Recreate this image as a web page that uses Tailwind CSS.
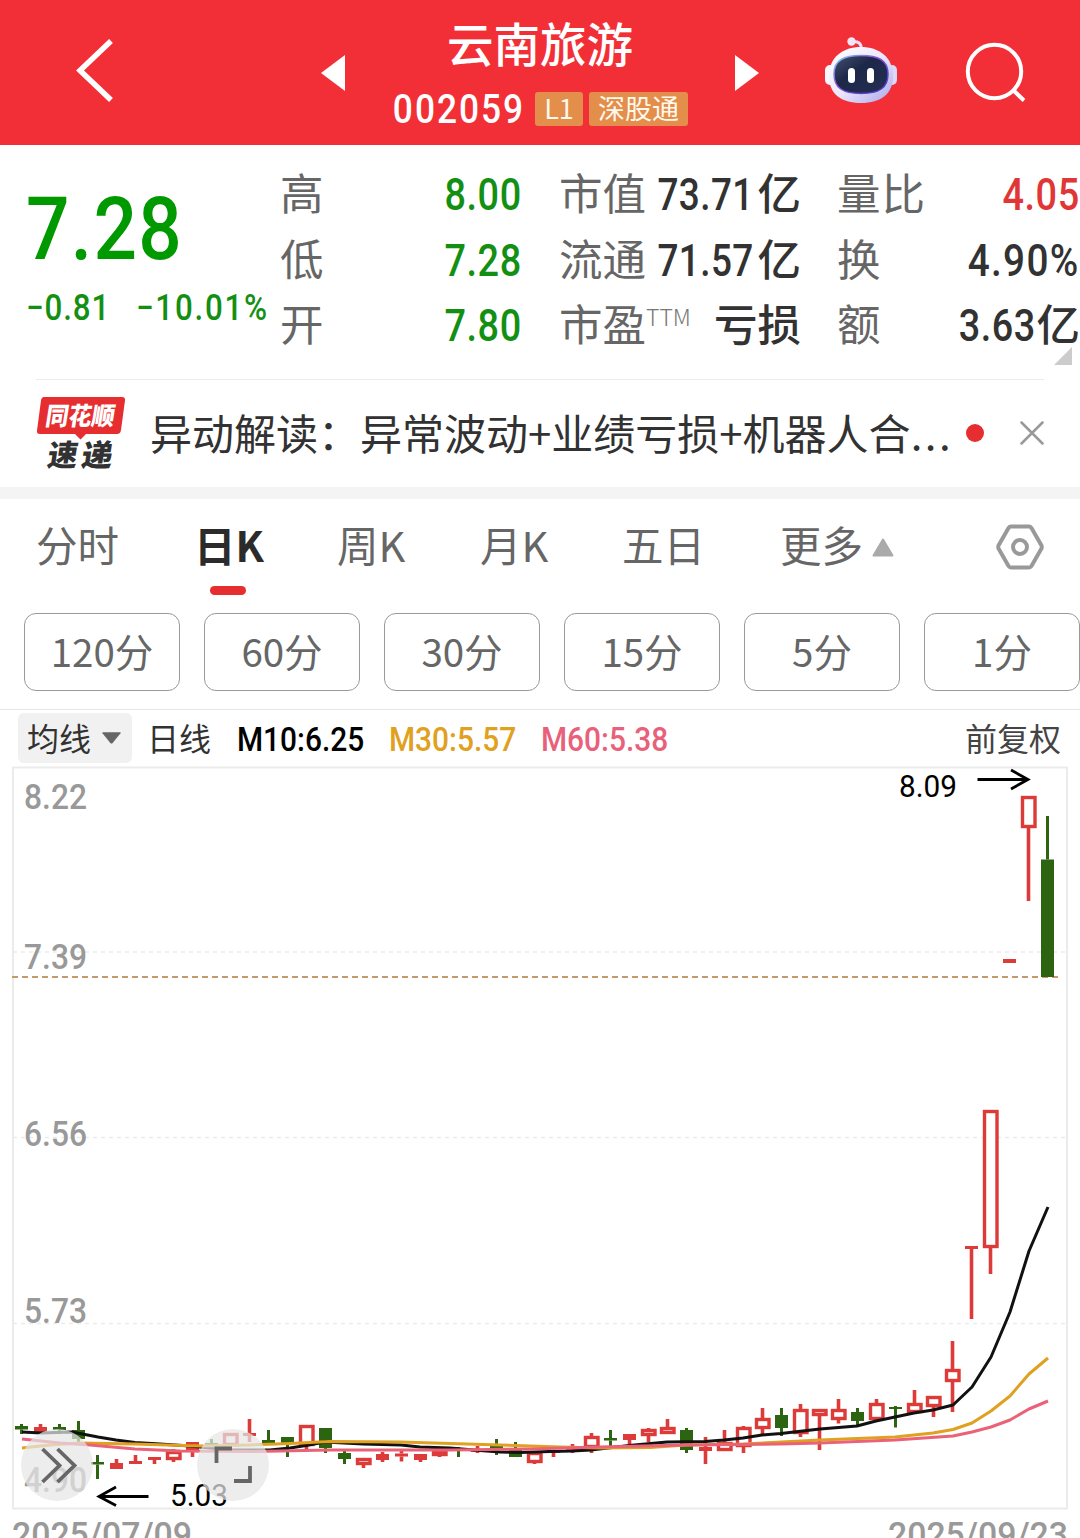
<!DOCTYPE html>
<html lang="zh-CN">
<head>
    <meta charset="UTF-8">
    <meta name="viewport" content="width=device-width, initial-scale=1.0">
    <title>云南旅游 002059</title>
    <script src="https://cdn.jsdelivr.net/npm/@tailwindcss/browser@4"></script>
</head>
<body class="w-[1080px] h-[1538px] overflow-hidden bg-white font-['Noto_Sans_CJK_SC',sans-serif] text-[#323232]">

    <!-- Header -->
    <header class="h-[145px] bg-[#f22f37] text-white flex items-start">
        <svg class="w-[321px] h-[145px] shrink-0" viewBox="0 0 321 145" fill="none">
            <path d="M111 41L80 70.5L111 100" stroke="#fff" stroke-width="5.5"/>
        </svg>
        <svg class="w-6 h-[145px] shrink-0" viewBox="0 0 24 145"><path d="M0 73L24 55V91Z" fill="#fff"/></svg>
        <div class="w-[390px] flex flex-col items-center">
            <h1 class="text-[46.5px] font-medium leading-[50px] mt-[17px]">云南旅游</h1>
            <div class="flex items-center h-[34px] mt-[25px]">
                <span class="w-[131px] mr-[12px] flex"><span class="inline-block origin-left scale-x-[0.86] font-[Roboto] font-medium text-[41px] leading-[34px] tracking-[2.300px] pl-[1px]">002059</span></span>
                <span class="w-12 h-[34px] rounded-[3px] bg-[#e38e4b] text-[27px] leading-[32px] text-center text-[#fff8ec]">L1</span>
                <span class="w-[99px] h-[34px] rounded-[3px] bg-[#e38e4b] text-[27px] leading-[32px] text-center text-[#fff8ec] ml-1.5">深股通</span>
            </div>
        </div>
        <svg class="w-6 h-[145px] shrink-0" viewBox="0 0 24 145"><path d="M24 73L0 55V91Z" fill="#fff"/></svg>
        <svg class="w-[76px] h-[145px] shrink-0 ml-16" viewBox="823 0 76 145">
            <defs>
                <linearGradient id="head" x1="0" y1="0" x2="1" y2="1">
                    <stop offset="0" stop-color="#fff"/><stop offset="0.5" stop-color="#ece8fb"/><stop offset="1" stop-color="#a9a4ea"/>
                </linearGradient>
                <linearGradient id="rim" x1="0" y1="0" x2="1" y2="1">
                    <stop offset="0" stop-color="#7fd3ef"/><stop offset="0.4" stop-color="#8a55dd"/><stop offset="1" stop-color="#4136c4"/>
                </linearGradient>
                <linearGradient id="face" x1="0" y1="0" x2="1" y2="1">
                    <stop offset="0" stop-color="#46506f"/><stop offset="0.4" stop-color="#1d2748"/><stop offset="1" stop-color="#252f54"/>
                </linearGradient>
            </defs>
            <path d="M852 42Q861 40 861.500 49" stroke="#e9dcf5" stroke-width="3" fill="none"/>
            <circle cx="851.500" cy="41.500" r="4.200" fill="#efe4f8"/>
            <rect x="825" y="65" width="10" height="20" rx="5" fill="#f8f6ff"/>
            <rect x="887" y="65" width="10" height="20" rx="5" fill="#dcd9f8"/>
            <path d="M861 47C879 47 893 57 893 76C893 94 881 103 861 103C841 103 829 94 829 76C829 57 843 47 861 47Z" fill="url(#head)"/>
            <path d="M861 55.500C878 55.500 888 60 888 74C888 88 879 93.500 861 93.500C843 93.500 834 88 834 74C834 60 844 55.500 861 55.500Z" fill="url(#face)" stroke="url(#rim)" stroke-width="1.500"/>
            <rect x="848" y="68" width="7" height="15" rx="3.500" fill="#fff"/>
            <rect x="867" y="68" width="7" height="15" rx="3.500" fill="#fff"/>
        </svg>
        <svg class="w-[70px] h-[145px] shrink-0 ml-[61px]" viewBox="960 0 70 145" fill="none" stroke="#fff" stroke-width="4">
            <circle cx="994.500" cy="71.500" r="26.700"/>
            <path d="M1013 90L1024 100.500"/>
        </svg>
    </header>

    <!-- Quote summary -->
    <section class="h-[234px] pt-[14px] flex relative">
        <div class="w-[280px] shrink-0 pl-[26px] text-[#009900] font-[Roboto] font-medium">
            <div class="mt-[26px] h-[88px] text-[88px] leading-[88px] tracking-[1.500px] origin-left scale-x-[0.87]">7.28</div>
            <div class="flex mt-[15px] text-[36px] leading-[40px] text-[#139013]">
                <span class="w-[110px] shrink-0 whitespace-nowrap origin-left scale-x-[0.87] tracking-[1px]">−0.81</span>
                <span class="shrink-0 whitespace-nowrap origin-left scale-x-[0.87] tracking-[2px]">−10.01%</span>
            </div>
        </div>
        <div class="w-[242px] shrink-0 text-[43.500px] leading-[65.500px]">
            <div class="flex h-[65.500px] justify-between"><span class="text-[#666]">高</span><span class="pt-[4px] font-[Roboto] font-medium text-[44.500px] tracking-[0.600px] text-[#139013] origin-right scale-x-[0.85]">8.00</span></div>
            <div class="flex h-[65.500px] justify-between"><span class="text-[#666]">低</span><span class="pt-[4px] font-[Roboto] font-medium text-[44.500px] tracking-[0.600px] text-[#139013] origin-right scale-x-[0.85]">7.28</span></div>
            <div class="flex h-[65.500px] justify-between"><span class="text-[#666]">开</span><span class="pt-[4px] font-[Roboto] font-medium text-[44.500px] tracking-[0.600px] text-[#139013] origin-right scale-x-[0.85]">7.80</span></div>
        </div>
        <div class="w-[242px] shrink-0 ml-[37px] text-[43.500px] leading-[65.500px]">
            <div class="flex h-[65.500px]"><span class="text-[#666] w-[87px] shrink-0">市值</span><div class="w-[155px] flex justify-end"><span class="pt-[4px] pr-[4px] font-[Roboto] font-medium text-[44.500px] tracking-[0.500px] origin-right scale-x-[0.83]">73.71</span><span class="font-medium">亿</span></div></div>
            <div class="flex h-[65.500px]"><span class="text-[#666] w-[87px] shrink-0">流通</span><div class="w-[155px] flex justify-end"><span class="pt-[4px] pr-[4px] font-[Roboto] font-medium text-[44.500px] tracking-[0.500px] origin-right scale-x-[0.83]">71.57</span><span class="font-medium">亿</span></div></div>
            <div class="flex h-[65.500px]"><span class="text-[#666]">市盈</span><span class="text-[23px] leading-[52px] text-[#777] font-light">TTM</span><span class="ml-auto font-medium">亏损</span></div>
        </div>
        <div class="w-[243px] shrink-0 ml-[36px] text-[43.500px] leading-[65.500px]">
            <div class="flex h-[65.500px] justify-between"><span class="text-[#666] tracking-[1px]">量比</span><span class="pt-[4px] font-[Roboto] font-medium text-[44.500px] tracking-[0.600px] text-[#e03636] origin-right scale-x-[0.85]">4.05</span></div>
            <div class="flex h-[65.500px] justify-between"><span class="text-[#666]">换</span><span class="pt-[4px] font-[Roboto] font-medium text-[44.500px] tracking-[1.500px] origin-right scale-x-[0.87]">4.90%</span></div>
            <div class="flex h-[65.500px]"><span class="text-[#666]">额</span><span class="ml-auto pt-[4px] pr-[1px] font-[Roboto] font-medium text-[44.500px] tracking-[0.600px] origin-right scale-x-[0.85]">3.63</span><span class="font-medium">亿</span></div>
        </div>
        <svg class="absolute left-[1054px] top-[202px] w-[18px] h-[18px]" viewBox="0 0 18 18"><path d="M18 0V18H0Z" fill="#ccc"/></svg>
    </section>

    <!-- News -->
    <section class="h-[108px] mx-9 border-t border-[#ececec] flex items-center">
        <svg class="w-[90px] h-[76px] shrink-0 mb-[2px] overflow-visible" viewBox="36 395 90 76">
            <path d="M44 397H122Q125.500 397 125 400.500L121 430Q120.500 434 117 434H86L80.500 439.500L75 434H40Q36.500 434 37 430.500L41 400.500Q41.500 397 44 397Z" fill="#e62e30"/>
            <g transform="skewX(-9)" font-weight="900">
                <text x="112" y="425.500" font-size="25" fill="#fff" textLength="69" lengthAdjust="spacingAndGlyphs">同花顺</text>
                <text x="120" y="466" font-size="30" fill="#323232" textLength="30" lengthAdjust="spacingAndGlyphs">速</text>
                <text x="154" y="466" font-size="30" fill="#323232" textLength="31" lengthAdjust="spacingAndGlyphs">递</text>
            </g>
        </svg>
        <p class="ml-[24px] mb-[4px] w-[807px] text-[42px] leading-[60px] whitespace-nowrap">异动解读：异常波动+业绩亏损+机器人合<span class="tracking-[2.500px]">...</span></p>
        <span class="w-[18px] h-[18px] mb-[1px] ml-[9px] rounded-full bg-[#e62e30] shrink-0"></span>
        <svg class="w-6 h-6 ml-[36px] mb-[1px] shrink-0" viewBox="0 0 24 24" stroke="#999" stroke-width="2.500" stroke-linecap="round"><path d="M1.500 1.500L22.500 22.500M22.500 1.500L1.500 22.500"/></svg>
    </section>
    <div class="h-3 bg-[#f4f4f4]"></div>

    <!-- Period tabs -->
    <nav class="h-[114px] flex text-[41.500px] leading-[60px] pt-[15px] pl-[36px] text-[#666] whitespace-nowrap">
        <span class="w-[158px]">分时</span>
        <div class="w-[143px] text-[#2b2b2b] font-bold">
            日K
            <div class="w-9 h-[9px] ml-[16px] mt-[12px] rounded-full bg-[#e62e30]"></div>
        </div>
        <span class="w-[143px]">周K</span>
        <span class="w-[142px]">月K</span>
        <span class="w-[158px]">五日</span>
        <span class="w-[92px]">更多</span>
        <svg class="w-[22px] h-[19px] mt-6" viewBox="0 0 22 19"><path d="M11 1.500L20.500 17.500H1.500Z" fill="#aaa" stroke="#aaa" stroke-width="2" stroke-linejoin="round"/></svg>
        <svg class="w-12 h-[46px] ml-[102px] mt-[10px]" viewBox="0 0 48 46" fill="none" stroke="#999">
            <path d="M15 2.500H33Q34.500 2.500 35.500 4L45.500 21.500Q46 23 45.500 24.500L35.500 42Q34.500 43.500 33 43.500H15Q13.500 43.500 12.500 42L2.500 24.500Q2 23 2.500 21.500L12.500 4Q13.500 2.500 15 2.500Z" stroke-width="4"/>
            <circle cx="24" cy="23" r="7" stroke-width="4"/>
        </svg>
    </nav>

    <!-- Minute periods -->
    <div class="h-24 flex gap-6 pl-6 text-[38.500px] leading-[72px] text-center text-[#666]">
        <button class="w-[156px] h-[78px] pb-1 shrink-0 rounded-xl border border-[#999]">120分</button>
        <button class="w-[156px] h-[78px] pb-1 shrink-0 rounded-xl border border-[#999]">60分</button>
        <button class="w-[156px] h-[78px] pb-1 shrink-0 rounded-xl border border-[#999]">30分</button>
        <button class="w-[156px] h-[78px] pb-1 shrink-0 rounded-xl border border-[#999]">15分</button>
        <button class="w-[156px] h-[78px] pb-1 shrink-0 rounded-xl border border-[#999]">5分</button>
        <button class="w-[156px] h-[78px] pb-1 shrink-0 rounded-xl border border-[#999]">1分</button>
    </div>

    <!-- Moving average legend -->
    <div class="h-[57px] border-t border-[#e5e5e5] pt-[3px] pl-[18px] pr-[19px] flex text-[32px] leading-[48px] whitespace-nowrap">
        <div class="w-[114px] h-[50px] rounded-md bg-[#f1f1f1] pl-[9px] flex">
            均线
            <svg class="w-[19px] h-3 ml-[11px] mt-[19px]" viewBox="0 0 20 12"><path d="M1 0H19Q20 0 19.500 1L11 11.500Q10 12 9 11.500L0.500 1Q0 0 1 0Z" fill="#666"/></svg>
        </div>
        <span class="ml-[15px] w-[90px]">日线</span>
        <span class="w-[152px] font-[Roboto] font-medium text-[33px] leading-[54px] text-black origin-left scale-x-[0.905]">M10:6.25</span>
        <span class="w-[152px] font-[Roboto] font-medium text-[33px] leading-[54px] text-[#e0a020] origin-left scale-x-[0.905]">M30:5.57</span>
        <span class="w-[152px] font-[Roboto] font-medium text-[33px] leading-[54px] text-[#e8617a] origin-left scale-x-[0.905]">M60:5.38</span>
        <span class="ml-auto text-[#444]">前复权</span>
    </div>

    <!-- Daily K chart -->
    <svg id="chart" class="block w-[1080px] h-[772px]" viewBox="0 766 1080 772" font-family="Roboto, sans-serif">
        <rect x="13" y="767.500" width="1054" height="741" fill="none" stroke="#ebebeb" stroke-width="2"/>
        <path d="M13 952H1066M13 1137.500H1066M13 1323.500H1066" stroke="#ebebeb" stroke-width="1.500" stroke-dasharray="4 4"/>
        <g font-size="35" font-weight="500" fill="#999">
            <text x="24" y="809" textLength="63" lengthAdjust="spacingAndGlyphs">8.22</text>
            <text x="24" y="969" textLength="63" lengthAdjust="spacingAndGlyphs">7.39</text>
            <text x="24" y="1146" textLength="63" lengthAdjust="spacingAndGlyphs">6.56</text>
            <text x="24" y="1323" textLength="63" lengthAdjust="spacingAndGlyphs">5.73</text>
            <text x="24" y="1492" textLength="63" lengthAdjust="spacingAndGlyphs">4.90</text>
            <text x="12" y="1547" textLength="180" lengthAdjust="spacingAndGlyphs">2025/07/09</text>
            <text x="888" y="1547" textLength="180" lengthAdjust="spacingAndGlyphs">2025/09/23</text>
        </g>
        <path d="M12 977H1062" stroke="#c49a6c" stroke-width="1.800" stroke-dasharray="6 4"/>
        <g id="candles"></g>
        <g fill="none" stroke-width="3" stroke-linejoin="round">
            <polyline stroke="#111" points="22,1432 41,1433 72,1432 98,1437 116,1440 135,1442.500 160,1444 190,1446 230,1450 270,1450 290,1448 306,1445.500 325,1442 363,1444 401,1445 420,1447 450,1448 480,1450.500 500,1452 520,1452.500 550,1451.500 572,1451 591,1450 629,1445.500 667,1442 705,1441.500 724,1440 743,1438 762,1435 781,1433.500 820,1429 857,1426 876,1421 895,1417 914,1413 933,1410 953,1405 972,1387 991,1357 1010,1312 1029,1251 1048,1207"/>
            <polyline stroke="#e0a020" points="22,1448 50,1445 80,1443 135,1444 200,1446 250,1445 290,1443.500 330,1441.500 400,1442 450,1443.500 500,1445 560,1447 600,1448 650,1447.500 686,1445 743,1444 820,1440 895,1437 933,1433 953,1429.500 972,1423 991,1411 1010,1396 1029,1374 1048,1358"/>
            <polyline stroke="#ea6277" points="22,1439 60,1443 90,1445 135,1449 180,1451 250,1451.500 330,1450 450,1450 530,1449 600,1447 686,1445 780,1444 820,1443 895,1440 953,1436 972,1432 991,1427 1010,1420 1029,1409 1048,1401"/>
        </g>
        <g font-size="31" fill="#000">
            <text x="899" y="797" textLength="58" lengthAdjust="spacingAndGlyphs">8.09</text>
            <text x="170" y="1506" textLength="58" lengthAdjust="spacingAndGlyphs">5.03</text>
        </g>
        <path d="M977.500 779.500H1028M1011 770L1028 779.500L1011 789M148.500 1496.500H99M116 1487L99 1496.500L116 1505.500" fill="none" stroke="#000" stroke-width="2.800"/>
        <g fill="#e6e6e6" fill-opacity="0.72">
            <circle cx="57" cy="1465" r="36"/>
            <circle cx="233" cy="1465" r="36"/>
        </g>
        <path d="M42.500 1449L59.500 1465.500L42.500 1482M57.500 1449L74.500 1465.500L57.500 1482M216.500 1463V1448.500H232M250 1466V1481H234" fill="none" stroke="#666" stroke-width="3.800"/>
    </svg>

    <script>
        // [type, high, body top, body bottom, low], type: g = down, r = up, h = up with hollow body
        const candles = [
            ['g', 1424, 1426, 1429.5, 1434], ['r', 1424, 1427, 1432, 1432], ['g', 1424, 1427, 1430, 1434],
            ['g', 1421, 1430, 1439, 1442], ['g', 1455, 1462, 1464.5, 1479], ['r', 1459, 1463, 1469, 1469],
            ['r', 1455, 1461, 1464, 1464], ['r', 1457, 1457, 1460, 1464], ['h', 1449, 1451, 1460, 1462],
            ['r', 1442, 1442, 1450, 1457], ['g', 1439, 1443, 1446, 1446], ['h', 1433, 1433, 1446, 1446],
            ['r', 1419, 1433, 1436, 1442], ['g', 1430, 1440, 1443, 1443], ['g', 1437, 1437, 1443, 1457],
            ['h', 1425, 1425, 1446, 1449], ['g', 1428, 1428, 1448, 1453], ['g', 1451, 1453, 1459, 1464],
            ['h', 1458, 1458, 1465, 1468], ['r', 1452, 1454, 1460, 1462], ['r', 1450, 1453.5, 1456.5, 1461.5],
            ['r', 1454, 1454, 1460, 1462], ['h', 1450, 1450, 1456, 1457], ['g', 1447, 1448, 1451, 1457],
            ['r', 1446, 1449, 1452, 1453], ['g', 1439, 1446, 1449, 1455], ['g', 1442, 1449, 1457, 1457],
            ['h', 1452, 1452, 1463, 1464], ['r', 1450, 1450, 1453, 1457], ['r', 1444, 1448, 1451, 1453],
            ['h', 1433, 1436, 1448, 1453], ['g', 1430, 1438, 1440.5, 1446], ['r', 1434, 1434, 1440, 1445],
            ['h', 1428, 1429, 1436, 1442], ['h', 1419, 1427, 1434, 1434], ['g', 1428, 1430, 1450, 1453],
            ['r', 1437, 1447, 1451, 1464], ['h', 1430, 1442, 1451, 1451], ['h', 1426, 1427, 1447, 1453],
            ['h', 1408, 1418, 1429, 1434], ['g', 1408, 1415, 1428, 1436], ['h', 1404, 1409, 1434, 1437],
            ['h', 1409, 1409, 1416, 1450], ['h', 1399, 1409, 1420, 1423.5], ['g', 1408, 1412, 1421, 1427],
            ['h', 1399, 1403, 1420, 1420], ['g', 1406, 1407, 1409, 1427.5], ['h', 1390, 1403, 1413, 1413],
            ['h', 1396, 1396, 1407, 1417], ['h', 1341, 1369, 1382, 1412], ['r', 1246, 1246, 1249, 1319],
            ['h', 1110, 1110, 1248, 1274], ['r', 959, 959, 963, 963], ['h', 796, 796, 828, 901],
            ['g', 816, 859.5, 977, 977]
        ];

        let html = '';
        candles.forEach(([type, high, top, bottom, low], i) => {
            const x = 21.5 + i * 19;
            const color = type === 'g' ? '#2d6412' : '#dd3a3a';
            const w = type === 'g' ? 3 : 3.6;
            if (top > high) html += `<path d="M${x} ${high}V${top}" stroke="${color}" stroke-width="${w}"/>`;
            if (low > bottom) html += `<path d="M${x} ${bottom}V${low}" stroke="${color}" stroke-width="${w}"/>`;
            if (type === 'h') {
                html += `<rect x="${x - 6}" y="${top + 1.5}" width="12.5" height="${bottom - top - 3}" fill="#fff" stroke="${color}" stroke-width="3.4"/>`;
            } else {
                html += `<rect x="${x - 6.5}" y="${top}" width="13" height="${bottom - top}" fill="${color}"/>`;
            }
        });
        document.getElementById('candles').innerHTML = html;
    </script>
</body>
</html>
